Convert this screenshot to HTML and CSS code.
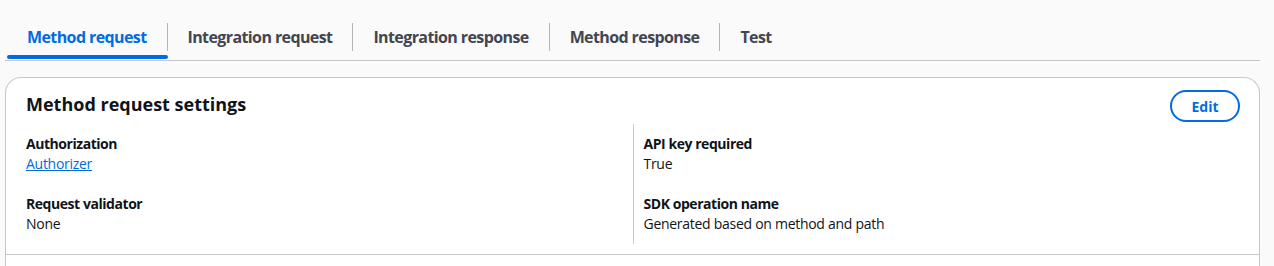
FILE: index.html
```html
<!DOCTYPE html>
<html lang="en">
  <head>
    <meta charset="UTF-8" />
    <title>Method request</title>
    <link rel="stylesheet" href="styles.css">
  </head>
  <body>
    <div class="page">
      <div class="tabs">
        <div class="tab active"><span class="tab-label">Method request</span></div>
        <div class="tab"><span class="tab-label">Integration request</span></div>
        <div class="tab"><span class="tab-label">Integration response</span></div>
        <div class="tab"><span class="tab-label">Method response</span></div>
        <div class="tab"><span class="tab-label last">Test</span></div>
      </div>

      <div class="card">
        <div class="card-header">
          <h2 class="card-title">Method request settings</h2>
          <button class="btn-edit">Edit</button>
        </div>
        <div class="columns">
          <div class="col">
            <div class="field">
              <div class="label">Authorization</div>
              <div class="value"><a href="javascript:;">Authorizer</a></div>
            </div>
            <div class="field">
              <div class="label">Request validator</div>
              <div class="value">None</div>
            </div>
          </div>
          <div class="col col-right">
            <div class="field">
              <div class="label">API key required</div>
              <div class="value">True</div>
            </div>
            <div class="field">
              <div class="label">SDK operation name</div>
              <div class="value">Generated based on method and path</div>
            </div>
          </div>
        </div>
        <div class="card-body"></div>
      </div>
    </div>
  </body>
</html>
```

FILE: styles.css
```css
* {
  margin: 0;
  padding: 0;
  box-sizing: border-box;
}
body {
  background-color: #fafafa;
  font-family: "Open Sans", "Noto Sans", sans-serif;
  color: #0f141a;
}
.page {
  padding: 0 14px 0 5px;
}
.tabs {
  display: flex;
  padding: 23px 0 0 2px;
  border-bottom: 1px solid #c6c6cd;
}
.tab {
  position: relative;
  padding-bottom: 9px;
}
.tab-label {
  display: block;
  padding: 0 20px;
  line-height: 28px;
  font-size: 16px;
  font-weight: 700;
  letter-spacing: -0.6px;
  color: #424650;
  border-right: 1px solid #b4b4bb;
}
.tab-label.last {
  border-right: none;
}
.tab.active .tab-label {
  color: #006ce0;
}
.tab.active::after {
  content: "";
  position: absolute;
  left: 0;
  right: 0;
  bottom: 1px;
  height: 4px;
  border-radius: 2px;
  background-color: #006ce0;
}
.card {
  margin-top: 16px;
  background-color: #fff;
  border: 1px solid #c6c6cd;
  border-bottom: none;
  border-radius: 16px 16px 0 0;
}
.card-header {
  display: flex;
  justify-content: space-between;
  align-items: flex-start;
  padding: 12px 19px 0 20px;
}
.card-title {
  font-size: 18px;
  line-height: 22px;
  font-weight: 700;
  padding-top: 3px;
}
.btn-edit {
  height: 32px;
  width: 70px;
  border: 2px solid #006ce0;
  border-radius: 16px;
  background: #fff;
  color: #006ce0;
  font-family: inherit;
  font-size: 14px;
  font-weight: 700;
}
.columns {
  display: grid;
  grid-template-columns: 1fr 1fr;
  margin-top: 2px;
  padding: 0 20px 10px;
  border-bottom: 1px solid #c6c6cd;
}
.col {
  padding: 10px 0;
  display: flex;
  flex-direction: column;
  gap: 20px;
}
.col-right {
  border-left: 1px solid #c6c6cd;
  padding-left: 10px;
}
.label {
  font-size: 14px;
  line-height: 20px;
  font-weight: 700;
  letter-spacing: -0.45px;
}
.value {
  font-size: 14px;
  line-height: 20px;
  letter-spacing: -0.28px;
}
.value a {
  color: #006ce0;
}
.card-body {
  height: 20px;
}
```
